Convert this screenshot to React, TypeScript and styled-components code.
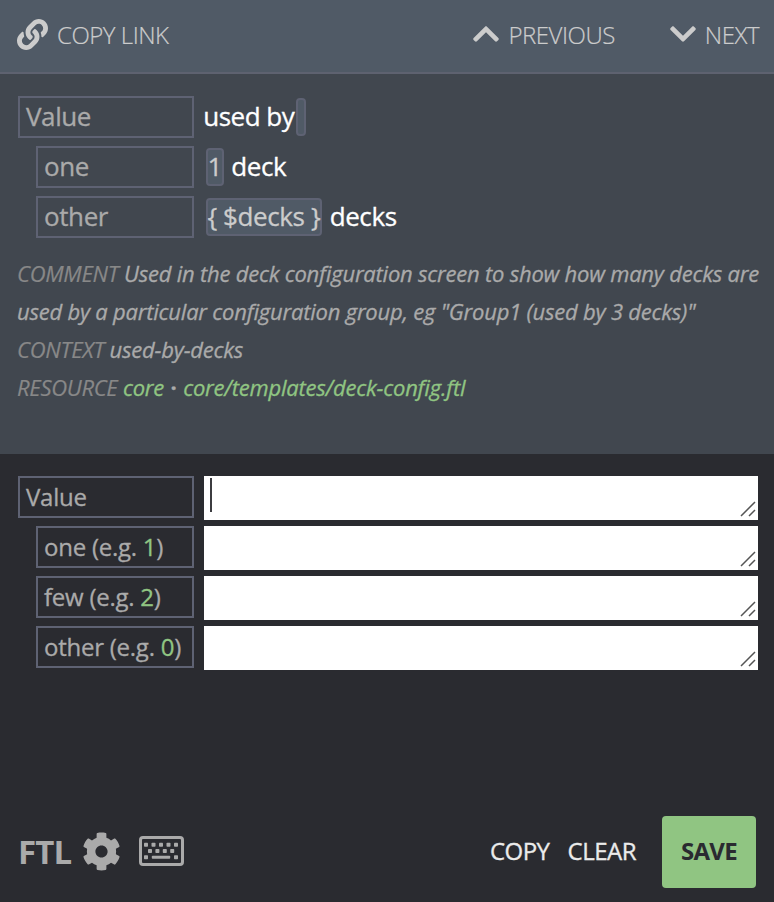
import React from 'react';
import styled, { createGlobalStyle } from 'styled-components';
import { FaLink, FaChevronUp, FaChevronDown, FaCog } from 'react-icons/fa';

const GlobalStyle = createGlobalStyle`
  * { box-sizing: border-box; }
  body {
    margin: 0;
    background: #2a2b30;
    font-family: "Open Sans", "Noto Sans", sans-serif;
    font-feature-settings: "liga" 1;
    color: #aaa;
  }
`;

const Editor = styled.main`
  display: flex;
  flex-direction: column;
  width: 774px;
  height: 902px;
  overflow: hidden;
`;

const Toolbar = styled.header`
  display: flex;
  align-items: center;
  height: 74px;
  padding: 0 15px 2px 17px;
  background: #505a66;
  border-bottom: 2px solid #5e6270;
`;

const ToolbarButton = styled.button<{ $push?: boolean; $gap: number }>`
  display: flex;
  align-items: center;
  gap: ${(p) => p.$gap}px;
  margin: 0 0 0 ${(p) => (p.$push ? 'auto' : '0')};
  padding: 0;
  border: 0;
  background: none;
  color: #ccc;
  font: 300 24px/34px "Open Sans", sans-serif;
  letter-spacing: -0.47px;
  -webkit-text-stroke: 0.2px;
  white-space: nowrap;

  & + & + & { margin-left: 53px; }
  svg { display: block; margin-top: -2px; }
`;

const Source = styled.section`
  height: 380px;
  padding: 22px 0 0 18px;
  background: #41474f;
`;

const Row = styled.div<{ $nested?: boolean }>`
  display: flex;
  height: 50px;
  padding-left: ${(p) => (p.$nested ? 18 : 0)}px;
`;

const Label = styled.div<{ $nested?: boolean; $large?: boolean }>`
  flex: none;
  width: ${(p) => (p.$nested ? 158 : 176)}px;
  height: 42px;
  padding-left: 6px;
  border: 2px solid #5e6273;
  color: #aaa;
  font-size: ${(p) => (p.$large ? 26 : 24)}px;
  letter-spacing: ${(p) => (p.$large ? -0.4 : -0.25)}px;
  line-height: ${(p) => (p.$large ? 36 : 38)}px;
  -webkit-text-stroke: 0.3px;
  white-space: pre;
`;

const Example = styled.span`
  color: #90c582;
`;

const SourceText = styled.div`
  display: flex;
  align-items: center;
  height: 42px;
  margin-left: 10px;
  color: #fff;
  font-size: 26px;
  letter-spacing: -0.4px;
  line-height: 36px;
  -webkit-text-stroke: 0.3px;
  white-space: pre;
`;

const Placeable = styled.mark<{ $lead?: boolean }>`
  min-width: 10px;
  height: 38px;
  margin-left: ${(p) => (p.$lead ? 2 : 0)}px;
  border: 2px solid #5e6273;
  border-radius: 4px;
  background: #505a66;
  color: #ccc;
  line-height: 32px;
  text-indent: -0.6px;
`;

const Phrase = styled.span<{ $first?: boolean }>`
  height: 38px;
  margin-left: ${(p) => (p.$first ? -0.8 : 1)}px;
  letter-spacing: ${(p) => (p.$first ? -0.5 : -0.4)}px;
`;

const Details = styled.div`
  margin: 8px 0 0 -1px;
  color: #aaa;
  font-size: 22px;
  font-style: italic;
  letter-spacing: -0.22px;
  line-height: 38px;
  -webkit-text-stroke: 0.3px;
  white-space: nowrap;
`;

const Term = styled.span`
  color: #888;
  letter-spacing: -0.28px;
  -webkit-text-stroke: 0.2px;
`;

const ResourceLink = styled.a`
  color: #90c582;
`;

const Separator = styled.span`
  padding: 0 1px;
  font-style: normal;
  font-weight: 700;
`;

const Translation = styled.section`
  flex: 1;
  padding: 22px 16px 0 18px;
`;

const Field = styled.div`
  display: flex;
  flex: 1;
  align-items: flex-end;
  justify-content: space-between;
  height: 44px;
  margin-left: 10px;
  padding: 2px 2px 3px 6px;
  background: #fff;
`;

const Caret = styled.span`
  align-self: flex-start;
  width: 2px;
  height: 34px;
  background: #3c3c40;
`;

const Grip = styled.svg`
  display: block;
  margin-left: auto;
`;

const Footer = styled.footer`
  display: flex;
  align-items: center;
  height: 86px;
  padding: 0 18px 14px 18px;
`;

const FtlToggle = styled.button`
  width: 54px;
  margin: 0 10px 0 0;
  padding: 0;
  border: 0;
  background: none;
  color: #aaa;
  font: 700 33px/44px "Open Sans", sans-serif;
  letter-spacing: -0.8px;
  text-align: left;
`;

const IconButton = styled.button`
  display: flex;
  margin: -2px 18px 0 0;
  padding: 0;
  border: 0;
  background: none;
  color: #aaa;
`;

const TextButton = styled.button<{ $push?: boolean }>`
  margin: -2px 0 0 ${(p) => (p.$push ? 'auto' : '18px')};
  padding: 0;
  border: 0;
  background: none;
  color: #ebebeb;
  font: 400 24px/34px "Open Sans", sans-serif;
  letter-spacing: -0.5px;
  -webkit-text-stroke: 0.3px;
`;

const SaveButton = styled.button`
  width: 94px;
  height: 72px;
  margin-left: 26px;
  padding: 0 0 2px;
  border: 0;
  border-radius: 4px;
  background: #90c582;
  color: #2a2b30;
  font: 700 24px/34px "Open Sans", sans-serif;
  letter-spacing: -0.7px;
`;

const ResizeGrip = () => (
  <Grip width="16" height="16" viewBox="0 0 16 16" fill="none" stroke="#555" strokeWidth="1.5">
    <path d="M1 15 15 1M9 15l6-6" />
  </Grip>
);

const KeyboardIcon = () => (
  <svg width="45" height="30" viewBox="0 0 45 30" fill="currentColor">
    <rect x="1.5" y="1.5" width="42" height="27" rx="2.5" fill="none" stroke="currentColor" strokeWidth="3" />
    {[7, 14.5, 22, 29.5, 37].map((x) => (
      <rect key={x} x={x - 2} y="6.7" width="4" height="4" rx="0.7" />
    ))}
    {[11, 18.4, 25.8, 33.2].map((x) => (
      <rect key={x} x={x - 2} y="13" width="4" height="4" rx="0.7" />
    ))}
    <rect x="5" y="19.3" width="4" height="4" rx="0.7" />
    <rect x="12.8" y="19.8" width="18.4" height="3" rx="0.7" />
    <rect x="35" y="19.3" width="4" height="4" rx="0.7" />
  </svg>
);

const forms = [
  { name: 'one', example: '1' },
  { name: 'few', example: '2' },
  { name: 'other', example: '0' },
];

export default function App() {
  return (
    <>
      <GlobalStyle />
      <Editor>
        <Toolbar>
          <ToolbarButton $gap={9}><FaLink size={31} />COPY LINK</ToolbarButton>
          <ToolbarButton $push $gap={7}><FaChevronUp size={30} />PREVIOUS</ToolbarButton>
          <ToolbarButton $gap={7}><FaChevronDown size={30} />NEXT</ToolbarButton>
        </Toolbar>
        <Source>
          <Row>
            <Label $large>Value</Label>
            <SourceText><Phrase $first>used by</Phrase><Placeable $lead /></SourceText>
          </Row>
          <Row $nested>
            <Label $nested $large>one</Label>
            <SourceText><Placeable $lead>1</Placeable><Phrase> deck</Phrase></SourceText>
          </Row>
          <Row $nested>
            <Label $nested $large>other</Label>
            <SourceText><Placeable $lead>{'{ $decks }'}</Placeable><Phrase> decks</Phrase></SourceText>
          </Row>
          <Details>
            <div><Term>COMMENT</Term> Used in the deck configuration screen to show how many decks are</div>
            <div>used by a particular configuration group, eg "Group1 (used by 3 decks)"</div>
            <div><Term>CONTEXT</Term> used-by-decks</div>
            <div><Term>RESOURCE</Term> <ResourceLink>core</ResourceLink> <Separator>·</Separator> <ResourceLink>core/templates/deck-config.ftl</ResourceLink></div>
          </Details>
        </Source>
        <Translation>
          <Row>
            <Label>Value</Label>
            <Field><Caret /><ResizeGrip /></Field>
          </Row>
          {forms.map((form) => (
            <Row $nested key={form.name}>
              <Label $nested>{form.name} (e.g. <Example>{form.example}</Example>)</Label>
              <Field><ResizeGrip /></Field>
            </Row>
          ))}
        </Translation>
        <Footer>
          <FtlToggle>FTL</FtlToggle>
          <IconButton aria-label="Settings"><FaCog size={39} /></IconButton>
          <IconButton aria-label="Keyboard shortcuts"><KeyboardIcon /></IconButton>
          <TextButton $push>COPY</TextButton>
          <TextButton>CLEAR</TextButton>
          <SaveButton>SAVE</SaveButton>
        </Footer>
      </Editor>
    </>
  );
}
